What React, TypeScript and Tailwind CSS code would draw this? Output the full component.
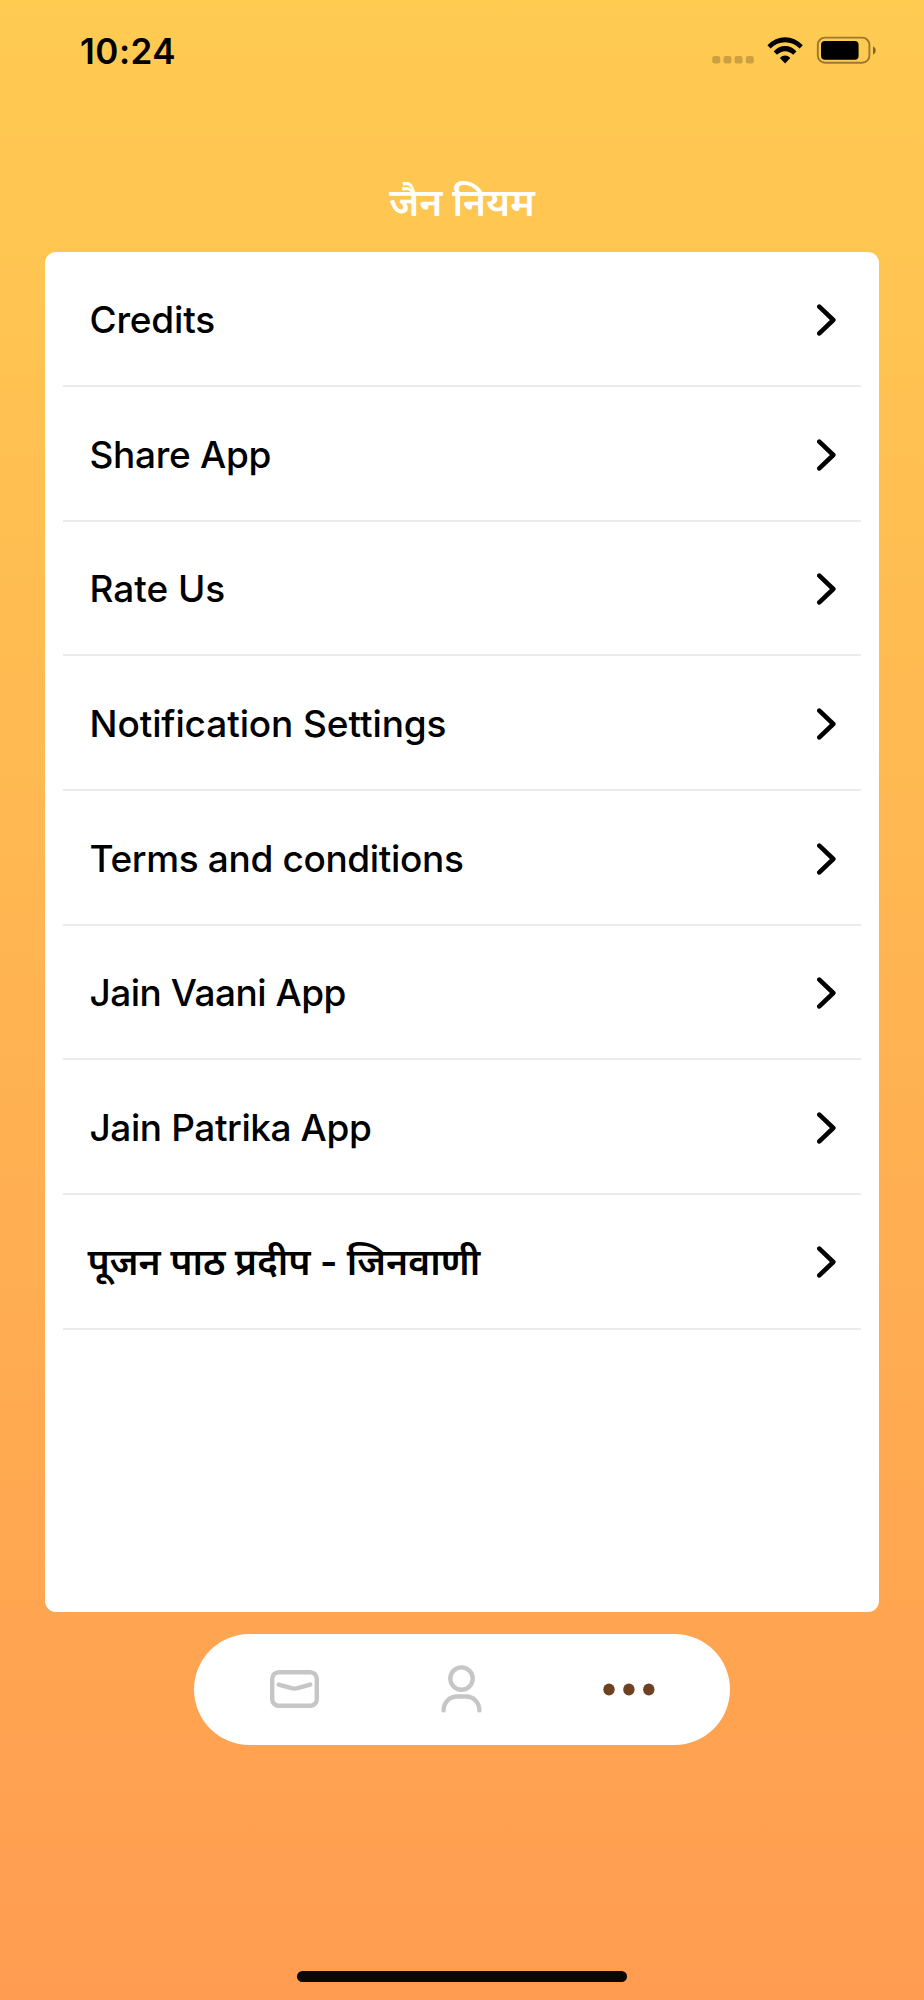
const items = [
  { label: "Credits", type: "text-[37px] font-medium tracking-[-0.2px]" },
  { label: "Share App", type: "text-[37px] font-medium tracking-[-0.3px]" },
  { label: "Rate Us", type: "text-[37px] font-medium tracking-[-0.05px]" },
  { label: "Notification Settings", type: "text-[37px] font-medium tracking-[-0.1px]" },
  { label: "Terms and conditions", type: "text-[37px] font-medium tracking-[-0.35px]" },
  { label: "Jain Vaani App", type: "text-[37px] font-medium tracking-[-0.5px]" },
  { label: "Jain Patrika App", type: "text-[37px] font-medium tracking-[-0.42px]" },
  { label: "पूजन पाठ प्रदीप - जिनवाणी", type: "-ml-[2px] text-[37.4px] font-semibold" },
];

function StatusBar() {
  return (
    <header className="flex h-[101px] items-center justify-between pl-[80px] pr-[48px]">
      <span className="pt-px text-[35px] leading-none font-semibold tracking-[0.5px]">10:24</span>
      <svg width="164" height="30" viewBox="712 36 164 30" className="block">
        <g fill="#000" opacity=".2">
          <rect x="712.3" y="56" width="8" height="7.6" rx="2.4" />
          <rect x="723.5" y="56" width="8" height="7.6" rx="2.4" />
          <rect x="734.6" y="56" width="8" height="7.6" rx="2.4" />
          <rect x="745.8" y="56" width="8" height="7.6" rx="2.4" />
        </g>
        <path d="M767.4 45.2C777.5 34.5 792.7 34.5 802.8 45.2L799.6 48.4C791.5 40.2 778.7 40.2 770.6 48.4Z" />
        <path d="M773.7 51.4C780.2 44.3 790 44.3 796.5 51.4L793.2 54.8C788.3 50.1 781.9 50.1 777 54.8Z" />
        <path d="M779.9 58C782.9 54.7 787.3 54.7 790.3 58L785.1 63.5Z" />
        <rect x="817.8" y="37.6" width="51.6" height="25.2" rx="7.2" fill="none" stroke="#000" strokeOpacity=".4" strokeWidth="1.9" />
        <rect x="821" y="41" width="37.6" height="18.8" rx="4" />
        <path d="M873 46.3Q875.8 47.6 875.8 50.4T873 54.7Z" opacity=".5" />
      </svg>
    </header>
  );
}

export default function App() {
  return (
    <div className="flex h-[2000px] w-[924px] flex-col overflow-hidden bg-linear-to-b from-[#ffcb51] to-[#ff9c51] font-['Inter','Noto_Sans_Devanagari','Noto_Sans',sans-serif] text-black">
      <StatusBar />
      <h1 className="flex h-[151.3px] items-end justify-center pb-[20px] text-[39px] leading-[60px] font-semibold text-white">
        जैन नियम
      </h1>
      <main className="mx-[45px] h-[1359.4px] w-[834.4px] shrink-0 rounded-[11px] bg-white px-[18px]">
        {items.map((item) => (
          <button
            key={item.label}
            className="flex h-[134.66px] w-full items-center justify-between border-b-2 border-[#ebebeb] pt-[2.5px] pr-[25.5px] pl-[26.5px] text-left"
          >
            <span className={`leading-[50px] whitespace-nowrap ${item.type}`}>{item.label}</span>
            <svg width="19" height="32" viewBox="0 0 19 32" fill="none" stroke="#000" strokeWidth="4.6" strokeLinecap="round" strokeLinejoin="round">
              <path d="M2.3 2.6L16.3 16L2.3 29.4" />
            </svg>
          </button>
        ))}
      </main>
      <nav className="mx-auto mt-[22px] grid h-[111.6px] w-[536px] shrink-0 grid-cols-3 items-center rounded-full bg-white">
        <svg className="ml-[76px]" width="49" height="38" viewBox="0 0 49 38" fill="none" stroke="#c6c6c6" strokeWidth="4.4" strokeLinecap="round" strokeLinejoin="round">
          <rect x="2.2" y="2.2" width="44.6" height="33.6" rx="6.6" />
          <path d="M8.7 14.6L21.5 18.2Q24.5 19 27.5 18.2L40.3 14.6" />
        </svg>
        <svg className="mx-auto" width="41" height="48" viewBox="0 0 41 48" fill="none" stroke="#c6c6c6" strokeWidth="4.4" strokeLinecap="round">
          <circle cx="20.5" cy="13.6" r="11.2" />
          <path d="M2.6 45.4C2.6 37.5 8.5 31.5 16 31.5H25C32.5 31.5 38.4 37.5 38.4 45.4" />
        </svg>
        <svg className="ml-[52px]" width="52" height="13" viewBox="0 0 52 13" fill="#6f4123">
          <ellipse cx="6" cy="6.5" rx="5.7" ry="6.1" />
          <ellipse cx="25.9" cy="6.5" rx="5.7" ry="6.1" />
          <ellipse cx="45.8" cy="6.5" rx="5.7" ry="6.1" />
        </svg>
      </nav>
      <div className="mx-auto mt-auto mb-[18px] h-[11px] w-[330px] shrink-0 rounded-full bg-[#080808]" />
    </div>
  );
}
